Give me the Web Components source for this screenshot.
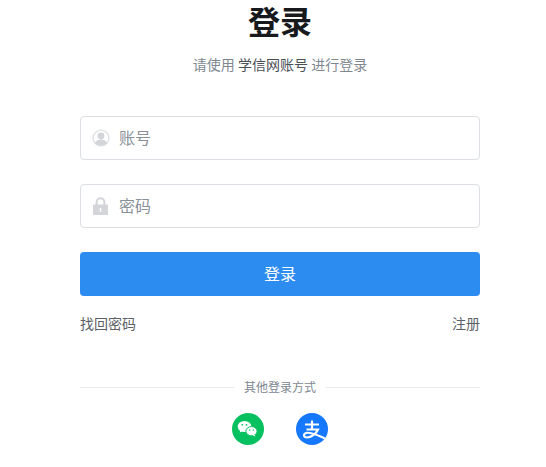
<!DOCTYPE html>
<html lang="zh-CN"><head><meta charset="utf-8">
<style>
html,body{margin:0;padding:0;background:#fff;overflow:hidden}
body{font-family:"Noto Sans CJK SC","Liberation Sans",sans-serif;height:467px}
</style></head><body>
<login-page></login-page>
<template id="t-field"><style>
:host{display:flex;align-items:center;box-sizing:border-box;width:400px;height:44px;border:1px solid #dcdfe3;border-radius:4px;padding-left:11px;gap:9px;background:#fff}
.i{width:18px;height:18px;display:flex;flex:none}
.p{font-size:16px;line-height:20px;color:#8a9099;padding-bottom:2px}
</style><span class="i"><slot name="icon"></slot></span><span class="p"><slot></slot></span></template>
<template id="t-btn"><style>
:host{display:flex;align-items:center;justify-content:center;box-sizing:border-box;width:400px;height:44px;border-radius:4px;background:#2d8cf0;color:#fff;font-size:16px;padding-bottom:2px}
</style><slot></slot></template>
<template id="t-divider"><style>
:host{display:flex;align-items:center;width:400px;gap:9px;font-size:12px;line-height:18px;color:#808791}
i{flex:1;height:1px;background:#e8eaec}
</style><i></i><span><slot></slot></span><i></i></template>
<template id="t-page"><style>
:host{display:flex;flex-direction:column;align-items:center;box-sizing:border-box;width:546px;height:467px;padding-left:14px;overflow:hidden}
h1{margin:0;height:44px;font-family:"Liberation Sans","Noto Sans CJK SC",sans-serif;font-size:32px;line-height:47px;font-weight:700;color:#17191c}
.sub{margin-top:9px;font-size:14px;line-height:22px;color:#808791}
.sub b{font-weight:400;color:#4a4f57}
login-field.a{margin-top:41px}
login-field.b{margin-top:24px}
login-button{margin-top:24px}
.links{display:flex;justify-content:space-between;width:400px;margin-top:17px;font-size:14px;line-height:20px;color:#5c6067}
login-divider{margin-top:45px}
.social{display:flex;gap:32px;margin-top:17px}
svg{display:block}
</style>
<h1>登录</h1>
<div class="sub">请使用 <b>学信网账号</b> 进行登录</div>
<login-field class="a"><svg slot="icon" width="18" height="18" viewBox="0 0 18 18"><circle cx="9" cy="9" r="8.6" fill="#dfe1e4"/><circle cx="9" cy="9" r="7.2" fill="#fff"/><circle cx="9" cy="7" r="3.4" fill="#d3d5d9"/><path d="M2.8 14C4 11.4 6.3 10.4 9 10.4s5 1 6.2 3.6A7.4 7.4 0 0 1 9 16.6 7.4 7.4 0 0 1 2.8 14z" fill="#d3d5d9"/></svg>账号</login-field>
<login-field class="b"><svg slot="icon" width="18" height="18" viewBox="0 0 18 18"><path d="M4.6 8V5.2a3.9 3.9 0 0 1 7.8 0V8" fill="none" stroke="#d3d5d9" stroke-width="2"/><path fill-rule="evenodd" d="M1.6 7.5h13.8a.6.6 0 0 1 .6.6v9.3a.6.6 0 0 1-.6.6H1.6a.6.6 0 0 1-.6-.6V8.100a.6.6 0 0 1 .6-.6zM7.700 11v3.800h1.600V11z" fill="#d3d5d9"/></svg>密码</login-field>
<login-button>登录</login-button>
<div class="links"><span>找回密码</span><span>注册</span></div>
<login-divider>其他登录方式</login-divider>
<div class="social">
<svg width="32" height="32" viewBox="0 0 32 32"><circle cx="16" cy="16" r="16" fill="#07c160"/><ellipse cx="12.500" cy="13.500" rx="6.800" ry="5.600" fill="#fff"/><path d="M8.500 17l-.8 2.600 3-1.600z" fill="#fff"/><ellipse cx="19.500" cy="18.200" rx="5.600" ry="4.600" fill="#fff" stroke="#07c160" stroke-width="1"/><path d="M22.500 21.700l1 1.800-3-1z" fill="#fff"/><circle cx="10.300" cy="11.800" r=".9" fill="#07c160"/><circle cx="14.500" cy="11.800" r=".9" fill="#07c160"/><circle cx="17.700" cy="17.100" r=".75" fill="#07c160"/><circle cx="21.300" cy="17.100" r=".75" fill="#07c160"/></svg>
<svg width="32" height="32" viewBox="0 0 32 32"><defs><clipPath id="c"><circle cx="16" cy="16" r="16"/></clipPath></defs><circle cx="16" cy="16" r="16" fill="#1677ff"/><path clip-path="url(#c)" d="M9 11.500h14M16 7.500v9M10.500 16.500h11.500C20 21 15 24.500 11 24.500 7.500 24.500 7 21 10 20c4-1.200 12 2 22 7" fill="none" stroke="#fff" stroke-width="2.200"/></svg>
</div></template>
<script>
function def(tag,tid){customElements.define(tag,class extends HTMLElement{constructor(){super();this.attachShadow({mode:'open'}).appendChild(document.getElementById(tid).content.cloneNode(true))}})}
def('login-field','t-field');def('login-button','t-btn');def('login-divider','t-divider');def('login-page','t-page');
</script>
</body></html>
